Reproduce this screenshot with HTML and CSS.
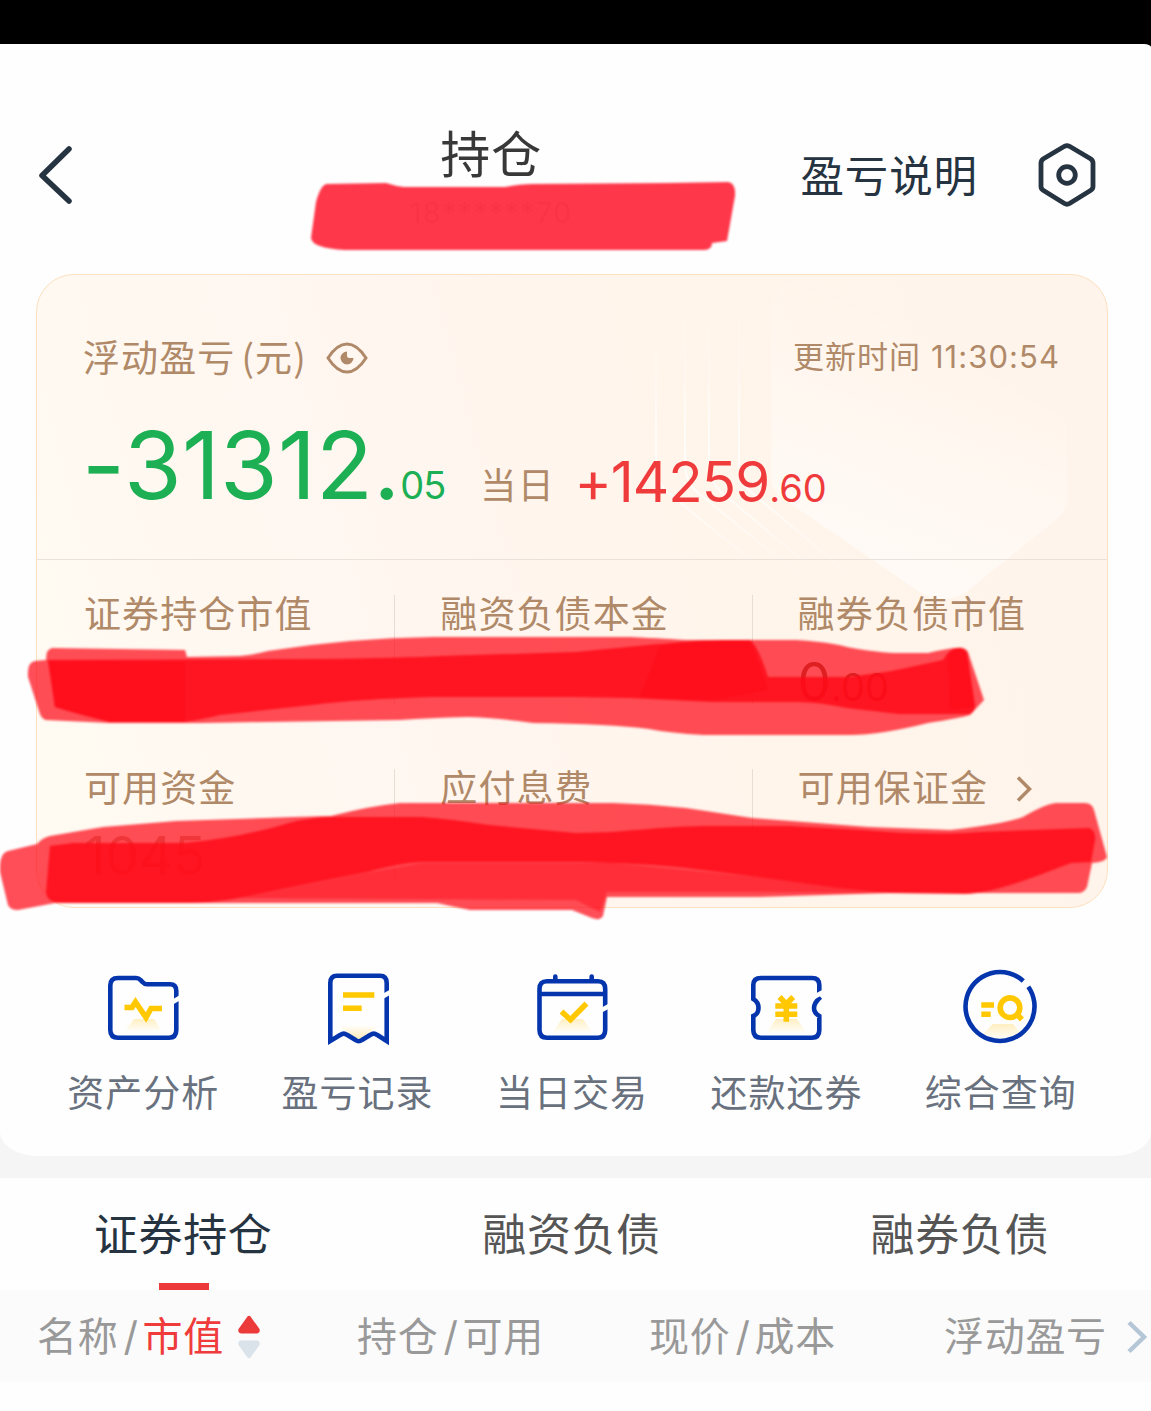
FILE: index.html
```
<!DOCTYPE html>
<html lang="zh-CN">
<head>
  <meta charset="UTF-8">
  <title>持仓</title>
  <link rel="stylesheet" href="styles.css">
</head>
<body>

  <div class="status-bar"></div>

  <main class="top">
    <header class="nav">
      <svg class="back" viewBox="0 0 36 60"><path d="M31 4 L4 30.500 L31 56"/></svg>
      <div class="title">
        <h1>持仓</h1>
        <p>18******70</p>
        <svg class="brush brush-title" viewBox="300 174 446 86">
          <path class="mid" d="M327 185 L386 184 Q395 187 404 188 L505 188 Q520 185 533 185 L668 184 L728 183 Q736 184 735 197 L727 242 L712 244 Q712 251 704 251 L345 251 Q312 249 311 239 L316 203 Q321 185 327 185 Z"/>
        </svg>
      </div>
      <a class="explain">盈亏说明</a>
      <svg class="settings" viewBox="0 0 58 64">
        <path d="M26.500 3.300 Q29 2 31.500 3.300 L52.500 15.800 Q55 17.500 55 20 V43.500 Q55 46 52.500 47.500 L31.500 60.500 Q29 62 26.500 60.500 L5.500 47.500 Q3 46 3 43.500 V20 Q3 17.500 5.500 15.800 Z"/>
        <circle cx="29" cy="32" r="8.300"/>
      </svg>
    </header>

    <section class="card">
      <svg class="card-bg" viewBox="0 0 1070 632">
        <defs>
          <linearGradient id="gem" gradientUnits="userSpaceOnUse" x1="960" y1="60" x2="860" y2="330">
            <stop offset="0" stop-color="#fff" stop-opacity="0"/>
            <stop offset="1" stop-color="#fff" stop-opacity="0.6"/>
          </linearGradient>
          <linearGradient id="ray" gradientUnits="userSpaceOnUse" x1="0" y1="0" x2="0" y2="310">
            <stop offset="0.1" stop-color="#fff" stop-opacity="0"/>
            <stop offset="0.65" stop-color="#fff" stop-opacity="0.8"/>
            <stop offset="1" stop-color="#fff" stop-opacity="0"/>
          </linearGradient>
        </defs>
        <path fill="url(#gem)" d="M734 40 Q736 10 764 0 L1020 140 Q1030 146 1030 160 V225 Q1030 236 1020 244 L928 318 Q904 332 878 314 L744 222 Q734 214 734 202 Z"/>
        <g class="rays">
          <path d="M619 20 V190 Q619 206 630 217 L740 306"/>
          <path d="M648 20 V190 Q648 206 660 217 L770 306"/>
          <path d="M672 20 V190 Q672 206 684 217 L790 306"/>
          <path d="M702 20 V190 Q702 206 714 217 L820 306"/>
        </g>
      </svg>

      <div class="summary">
        <div class="summary-head">
          <span class="label">浮动盈亏<i class="paren">(</i>元<i>)</i></span>
          <svg class="eye" viewBox="0 0 42 32">
            <path class="line" d="M2 16 Q11 2 21 2 T40 16 Q31 30 21 30 T2 16 Z"/>
            <path class="pupil" d="M21 9.500 A6.500 6.500 0 1 0 27.500 16 H23.500 Q21 16 21 13.500 Z"/>
          </svg>
          <span class="updated">更新时间 11:30:54</span>
        </div>
        <div class="profit">
          <span class="total">-31312.</span><span class="total-dec">05</span>
          <span class="today">当日</span>
          <span class="day">+14259</span><span class="day-dec">.60</span>
        </div>
      </div>

      <div class="stats">
        <div class="stat">
          <span class="label">证券持仓市值</span>
          <span class="amount"></span>
        </div>
        <div class="stat">
          <span class="label">融资负债本金</span>
          <span class="amount"></span>
        </div>
        <div class="stat">
          <span class="label">融券负债市值</span>
          <span class="amount">0<small>.00</small></span>
        </div>
        <div class="stat">
          <span class="label">可用资金</span>
          <span class="amount faint">1045</span>
        </div>
        <div class="stat">
          <span class="label">应付息费</span>
          <span class="amount"></span>
        </div>
        <div class="stat">
          <span class="label">可用保证金</span>
          <svg class="more" viewBox="0 0 16 28"><path d="M2 2.500 L13.500 14 L2 25.500"/></svg>
          <span class="amount"></span>
        </div>
      </div>

      <svg class="brush brush-stats" viewBox="0 620 1151 310">
        <path class="light" d="M52 648 L185 650 L187 657 L240 656 Q257 654 268 651 Q350 638 433 637 H631 Q670 639 686 640 H796 Q830 642 847 647 Q880 653 899 653 H928 Q950 648 957 648 Q965 647 968 652 L984 700 L970 715 Q960 718 928 723 Q880 735 851 735 H704 Q670 733 649 729 Q610 724 533 723 Q490 717 467 717 Q430 718 400 720 L202 723 H110 L46 720 Q42 719 40 714 L28 677 Q27 662 35 661 L46 660 Q46 649 52 648 Z"/>
        <path class="dense" d="M48 660 L320 659 Q400 658 441 656 L576 652 L638 646 Q700 640 723 640 L750 640 Q758 646 768 677 L847 677 Q890 672 906 668 L943 660 Q950 648 957 648 Q964 647 967 653 L975 706 Q974 714 968 714 L899 714 L847 708 Q820 702 796 702 H712 L631 698 L576 697 H433 Q360 699 312 705 L220 715 Q200 720 184 722 H110 Q80 715 55 707 Z"/>
        <path class="extra" d="M48 661 L185 662 V722 H110 L55 707 Z M660 646 Q700 640 750 640 L768 690 L712 700 L640 697 Z M948 655 Q957 645 967 652 L975 706 L950 710 Z"/>
        <path class="light" d="M8 851 L37 844 Q42 838 50 836 L103 827 L176 821 L294 817 L331 816 Q370 806 400 803 H613 Q650 804 686 808 L752 818 L869 827 L950 830 Q1000 825 1023 817 Q1045 804 1056 803 H1085 Q1092 803 1094 810 L1107 857 Q1106 862 1092 863 L1087 887 Q1084 893 1078 893 H888 L759 897 H607 L603 916 Q600 921 592 918 L572 910 H470 Q450 906 437 903 H55 L18 910 Q10 910 8 905 L0 872 Q-1 853 8 851 Z"/>
        <path class="dense" d="M50 846 L73 843 H184 Q230 839 275 827 Q300 819 323 817 H422 Q450 819 489 825 L576 833 L613 832 Q680 826 704 826 H789 L862 830 Q930 836 979 832 L1089 828 Q1096 830 1095 840 L1091 862 L1071 863 Q1050 871 1034 877 Q990 893 965 894 L888 893 L833 887 L759 877 L686 868 Q640 863 576 862 H422 Q400 863 367 872 L312 883 L239 898 Q210 903 184 903 H60 Q47 902 46 892 Z"/>
        <path class="soft" d="M370 872 L422 863 H613 L759 877 L888 893 L759 892 H607 L600 912 L576 900 L240 898 Z"/>
      </svg>
    </section>

    <svg class="defs">
      <linearGradient id="glow" x1="0" y1="0" x2="0" y2="1">
        <stop offset="0" stop-color="#ffefc2"/>
        <stop offset="1" stop-color="#fffdf8"/>
      </linearGradient>
      <linearGradient id="glow-up" x1="0" y1="1" x2="0" y2="0">
        <stop offset="0" stop-color="#ffe9b0"/>
        <stop offset="1" stop-color="#fffdf8"/>
      </linearGradient>
    </svg>

    <nav class="actions">
      <a>
        <svg viewBox="0 0 80 80">
          <path fill="url(#glow)" d="M31 51 H51 L59 63 H22 Z"/>
          <path class="blue" d="M73.300 32 V23 Q73.300 16.300 67 16.300 H44 Q41.500 16.300 39.500 14 L37.500 12 Q35.800 10 33 10 H15 Q7.300 10 7.300 17.500 V62 Q7.300 69.700 15 69.700 H66 Q73.300 69.700 73.300 62 V32"/>
          <path class="cut" d="M68 35 L79 28.500"/>
          <path class="yellow" d="M21.500 39.500 H29 L32.500 34 L43 49.500 L48 40.500 H59"/>
        </svg>
        <span>资产分析</span>
      </a>
      <a>
        <svg viewBox="0 0 80 80">
          <path fill="url(#glow-up)" d="M22 58 H60 L46 70 L40.700 73 L35 70 Z"/>
          <path class="blue" d="M68.700 26 V15 Q68.700 7.700 62 7.700 H19 Q12.300 7.700 12.300 15 V73 L22.500 66.800 Q25.700 64.500 29 66.800 L37.500 72 Q40.700 74.500 44 72 L52.500 66.800 Q55.700 64.500 59 66.800 L68.700 73 V26"/>
          <path class="cut" d="M63 29.500 L75 22.500"/>
          <path class="yellow" d="M25 27 H56.300 M25 40.300 H43.700"/>
        </svg>
        <span>盈亏记录</span>
      </a>
      <a>
        <svg viewBox="0 0 80 80">
          <path fill="url(#glow)" d="M30 51 H51 L60 64 H21 Z"/>
          <path class="blue" d="M73.200 40 V21 Q73.200 13.300 66 13.300 H15 Q7.500 13.300 7.500 21 V62 Q7.500 69.700 15 69.700 H66 Q73.200 69.700 73.200 62 V40 M7.500 26 H73.200"/>
          <path class="blue pin" d="M23.300 12 V8.500 M59.700 12 V8.500"/>
          <path class="cut" d="M68 43 L79 37"/>
          <path class="yellow" d="M29.500 43.500 L38.500 51.700 L54.500 35.500"/>
        </svg>
        <span>当日交易</span>
      </a>
      <a>
        <svg viewBox="0 0 80 80">
          <path fill="url(#glow)" d="M30 51 H51 L60 64 H21 Z"/>
          <path class="blue" d="M73.300 27 V17 Q73.300 10 66 10 H15 Q7.300 10 7.300 17 V31 Q12.500 34 12.500 40 T7.300 48 V62 Q7.300 69.700 15 69.700 H66 Q73.300 69.700 73.300 62 V48 Q68 45 68 40 T74.500 29"/>
          <path class="cut" d="M68 29 L79 23"/>
          <path class="yellow" d="M33.500 29 L40.300 36 L47.200 29 M40.300 35 V53.700 M29.300 38 H51.300 M29.300 46.300 H51.300"/>
        </svg>
        <span>还款还券</span>
      </a>
      <a>
        <svg viewBox="0 0 80 80">
          <path fill="url(#glow)" d="M31.700 56 H52.300 L60 66 Q41 76 22 66 Z"/>
          <path class="blue" d="M62.300 13 A34.500 34.500 0 1 0 67.300 18.700"/>
          <path class="yellow" d="M20.300 37 H33 M20.300 46.300 H29.700 M56 46.500 L61 51.500"/>
          <circle class="yellow" cx="49" cy="39.700" r="9.800"/>
        </svg>
        <span>综合查询</span>
      </a>
    </nav>
  </main>

  <div class="tabs">
    <a class="active">证券持仓</a>
    <a>融资负债</a>
    <a>融券负债</a>
  </div>

  <div class="columns">
    <span>名称<i>/</i><b>市值</b>
      <svg class="sort" viewBox="0 0 22 44">
        <path fill="#ec3a3b" d="M9.500 1.500 Q11 0 12.500 1.500 L21.500 14 Q22.500 18 19 18.500 H3 Q-0.500 18 0.500 14 Z"/>
        <path fill="#dae2ea" d="M9.500 42.500 Q11 44 12.500 42.500 L21.500 30 Q22.500 26 19 25.500 H3 Q-0.500 26 0.500 30 Z"/>
      </svg>
    </span>
    <span>持仓<i>/</i>可用</span>
    <span>现价<i>/</i>成本</span>
    <span>浮动盈亏
      <svg class="next" viewBox="0 0 20 34"><path d="M2 2.500 L17 17 L2 31.500"/></svg>
    </span>
  </div>

</body>
</html>
```
FILE: styles.css
```
* {
  box-sizing: border-box;
}

body {
  margin: 0;
  min-height: 1411px;
  background: #fefefe;
  font-family: Inter, "Noto Sans CJK SC", sans-serif;
  color: #263340;
  overflow-x: hidden;
  background-image: linear-gradient(#000 60px, #f5f5f5 60px, #f5f5f5 1200px, transparent 1200px);
}

svg {
  fill: none;
  flex-shrink: 0;
}

i {
  font-style: normal;
}

.status-bar {
  height: 44px;
  background: #000;
}

.top {
  height: 1112px;
  background: #fefefe;
  border-radius: 0 7px 38px 38px / 0 3px 24px 24px;
  padding: 0 43px 0 36px;
}

.nav {
  display: flex;
  align-items: center;
  height: 230px;
  padding: 32px 12px 0 2px;
}

.back {
  width: 36px;
  height: 60px;
}

.back path {
  stroke: #263340;
  stroke-width: 5.500;
  stroke-linecap: round;
  stroke-linejoin: round;
}

.title {
  position: relative;
  flex: 1;
  padding: 6px 0 0 108px;
  text-align: center;
}

.title h1 {
  margin: 0 0 10px;
  font-size: 50px;
  font-weight: 400;
  line-height: 60px;
  letter-spacing: 1px;
  color: #383838;
}

.title p {
  margin: 0;
  font-size: 29px;
  line-height: 36px;
  letter-spacing: 1.200px;
  color: #aaa;
}

.explain {
  font-size: 43.500px;
  letter-spacing: 0.900px;
  line-height: 60px;
  margin: 2px 60px 0 0;
}

.settings {
  width: 58px;
  height: 64px;
}

.settings path,
.settings circle {
  stroke: #263340;
  stroke-width: 4.800;
}

/* marker strokes */
.brush {
  position: absolute;
  fill: #ff0a18;
  filter: blur(1.200px);
  pointer-events: none;
}

.brush-title {
  right: 54px;
  top: 54px;
  width: 446px;
  height: 86px;
}

.brush-stats {
  left: -37px;
  top: 345px;
  width: 1151px;
  height: 310px;
}

.brush .mid {
  fill: #ff2c40;
  fill-opacity: 0.950;
}

.brush .light {
  fill-opacity: 0.720;
}

.brush .dense {
  fill-opacity: 0.860;
}

.brush .extra {
  fill-opacity: 0.600;
}

.brush .soft {
  fill-opacity: 0.450;
}

.card {
  position: relative;
  height: 634px;
  border: 1.500px solid #fde0be;
  border-radius: 38px;
  background: linear-gradient(75deg, #fffaf2 5%, #fff6f0 38%, #fff5eb 62%, #fff4eb 100%);
}

.card-bg {
  position: absolute;
  left: 0;
  top: 0;
  width: 1070px;
  height: 632px;
}

.rays path {
  stroke: url(#ray);
  stroke-width: 2;
}

.summary {
  position: relative;
  height: 285px;
  padding: 57px 48px 0 46px;
  border-bottom: 1.500px solid #e9e2db;
}

.summary-head {
  display: flex;
  align-items: center;
  height: 50px;
}

.label {
  font-size: 37px;
  letter-spacing: 1.100px;
  line-height: 50px;
  color: #b08968;
}

.label i {
  font-family: "Noto Sans CJK SC", sans-serif;
}

.label .paren {
  margin-left: 6px;
}

.eye {
  width: 42px;
  height: 32px;
  margin: 2px 0 0 19px;
}

.eye .line {
  stroke: #b08968;
  stroke-width: 3;
}

.eye .pupil {
  fill: #b08968;
}

.updated {
  margin: -6px -1px 0 auto;
  font-size: 31px;
  letter-spacing: 1.050px;
  color: #b08968;
}

.profit {
  display: flex;
  align-items: baseline;
  height: 110px;
  margin-top: 28px;
  line-height: 110px;
  color: #ef3b3b;
}

.total {
  margin-left: -1px;
  font-size: 93.500px;
  letter-spacing: 0.100px;
  color: #1caf53;
}

.total-dec {
  font-size: 38px;
  letter-spacing: -1px;
  color: #1caf53;
}

.today {
  margin: 0 19px 0 35px;
  font-size: 36px;
  letter-spacing: 1.600px;
  color: #b08968;
}

.day,
.day-dec {
  transform: translateY(3px);
}

.day {
  font-size: 56.500px;
  letter-spacing: -1px;
}

.day-dec {
  font-size: 38px;
}

.stats {
  position: relative;
  display: grid;
  grid-template-columns: repeat(3, 357.300px);
  grid-auto-rows: 174px;
  padding-top: 35px;
}

.stat {
  padding: 1px 0 0 47px;
  height: 110px;
  line-height: 38px;
  position: relative;
  white-space: nowrap;
}

.stat .label {
  line-height: 38px;
}

.stat:not(:nth-child(3n + 1)) {
  padding-left: 45px;
  border-left: 1px solid #e6ddd4;
}

.amount {
  display: block;
  margin-top: 11px;
  height: 60px;
  font-size: 53px;
  line-height: 60px;
  color: #8a5a42;
}

.amount small {
  font-size: 38px;
}

.faint {
  color: #c8a890;
}

.more {
  width: 16px;
  height: 28px;
  margin-left: 23px;
  vertical-align: -1px;
}

.more path {
  stroke: #b08968;
  stroke-width: 3.500;
}

.defs {
  position: absolute;
  width: 0;
  height: 0;
}

.actions {
  display: grid;
  grid-template-columns: repeat(5, 1fr);
  margin-top: 60px;
}

.actions a {
  display: flex;
  flex-direction: column;
  align-items: center;
  font-size: 37px;
  letter-spacing: 1px;
  line-height: 48px;
  color: #68717d;
}

.actions svg {
  width: 80px;
  height: 80px;
  margin-bottom: 22px;
}

.blue {
  stroke: #0535ad;
  stroke-width: 4.600;
}

.pin {
  stroke-linecap: round;
}

.cut {
  stroke: #fefefe;
  stroke-width: 4.500;
}

.yellow {
  stroke: #ffc800;
  stroke-width: 5.600;
}

.tabs {
  display: flex;
  justify-content: space-between;
  height: 112px;
  margin-top: 22px;
  padding: 0 102px 0 94px;
  background: #fefefe;
  font-size: 44px;
  letter-spacing: 0.600px;
  line-height: 115px;
  color: #555;
}

.tabs a {
  position: relative;
  height: 112px;
}

.tabs .active {
  color: #263340;
}

.tabs .active::after {
  content: "";
  position: absolute;
  left: 65px;
  bottom: 0;
  width: 50px;
  height: 7px;
  background: #ec3a3b;
}

.columns {
  display: grid;
  grid-template-columns: 320px 292px 295px 1fr;
  height: 92px;
  padding: 1px 0 0 37px;
  background: #fbfbfb;
  font-size: 40px;
  letter-spacing: 0.700px;
  line-height: 94px;
  white-space: nowrap;
  color: #999;
}

.columns span {
  display: flex;
  align-items: center;
  height: 91px;
}

.columns i {
  margin: 0 4px 0 5px;
}

.columns b {
  font-weight: 400;
  color: #ef3b3b;
}

.sort {
  width: 22px;
  height: 44px;
  margin-left: 14px;
}

.next {
  width: 20px;
  height: 34px;
  margin-left: 20px;
}

.next path {
  stroke: #b5c6d6;
  stroke-width: 4.500;
}
```
